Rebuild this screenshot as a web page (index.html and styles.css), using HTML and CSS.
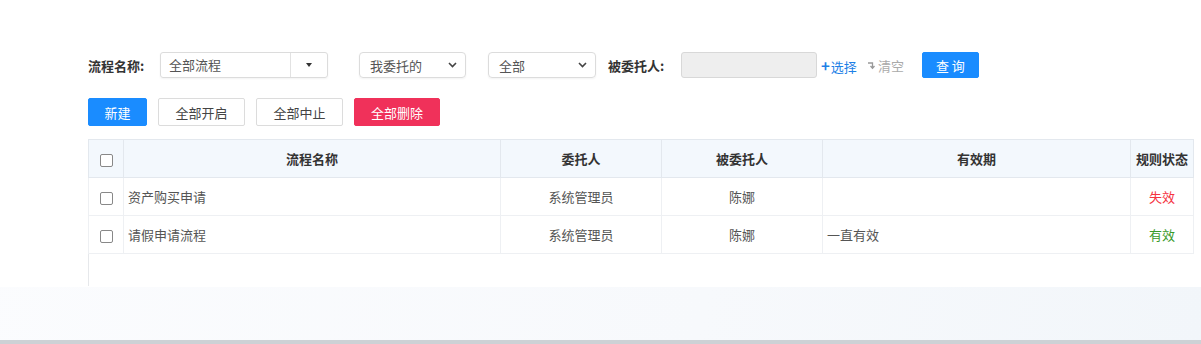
FILE: index.html
```html
<!DOCTYPE html>
<html lang="zh-CN">
<head>
    <meta charset="UTF-8">
    <title>委托管理</title>
    <link rel="stylesheet" href="styles.css">
</head>
<body>
    <div class="page">
        <div class="panel">
            <div class="filter-row">
                <span class="label">流程名称:</span>
                <div class="combo">
                    <span class="combo-text">全部流程</span>
                    <span class="combo-btn"><span class="caret"></span></span>
                </div>
                <div class="select sel-who">
                    <span>我委托的</span>
                    <svg class="chev" width="9" height="6" viewBox="0 0 9 6"><path d="M1 1l3.5 3.5L8 1" fill="none" stroke="#444" stroke-width="1.6"/></svg>
                </div>
                <div class="select sel-all">
                    <span>全部</span>
                    <svg class="chev" width="9" height="6" viewBox="0 0 9 6"><path d="M1 1l3.5 3.5L8 1" fill="none" stroke="#444" stroke-width="1.6"/></svg>
                </div>
                <span class="label label-to">被委托人:</span>
                <div class="input-disabled"></div>
                <a class="link-pick" href="#"><b>+</b>选择</a>
                <a class="link-clear" href="#">
                    <svg width="9" height="9" viewBox="0 0 9 9"><path d="M1 2h4.5v5M3.5 5l2 2.2 2-2.2" fill="none" stroke="#999" stroke-width="1.3"/></svg>清空
                </a>
                <button class="btn btn-blue btn-query">查 询</button>
            </div>

            <div class="btn-row">
                <button class="btn btn-blue btn-new">新建</button>
                <button class="btn btn-plain">全部开启</button>
                <button class="btn btn-plain">全部中止</button>
                <button class="btn btn-red">全部删除</button>
            </div>

            <div class="grid">
                <table>
                    <colgroup>
                        <col style="width:35px">
                        <col style="width:377px">
                        <col style="width:161px">
                        <col style="width:161px">
                        <col style="width:308px">
                        <col style="width:63px">
                    </colgroup>
                    <thead>
                        <tr>
                            <th><span class="check"></span></th>
                            <th>流程名称</th>
                            <th>委托人</th>
                            <th>被委托人</th>
                            <th>有效期</th>
                            <th>规则状态</th>
                        </tr>
                    </thead>
                    <tbody>
                        <tr>
                            <td><span class="check"></span></td>
                            <td class="left">资产购买申请</td>
                            <td>系统管理员</td>
                            <td>陈娜</td>
                            <td class="left"></td>
                            <td class="off">失效</td>
                        </tr>
                        <tr>
                            <td><span class="check"></span></td>
                            <td class="left">请假申请流程</td>
                            <td>系统管理员</td>
                            <td>陈娜</td>
                            <td class="left">一直有效</td>
                            <td class="on">有效</td>
                        </tr>
                    </tbody>
                </table>
            </div>
        </div>
    </div>
</body>
</html>
```

FILE: styles.css
```css
html, body {
    margin: 0;
    height: 100%;
}
body {
    font-family: "Noto Sans CJK SC", "Microsoft YaHei", sans-serif;
    font-size: 13px;
    color: #444;
    background: linear-gradient(100deg, #fbfcfe 0%, #f7f9fc 60%, #f2f6fa 100%);
    overflow: hidden;
}
.page {
    height: 340px;
    border-bottom: 4px solid #cdd1d5;
    box-sizing: content-box;
    background: linear-gradient(to bottom, #ffffff 0, #ffffff 287px, transparent 287px);
}
.panel {
    margin-left: 88px;
    width: 1109px;
    padding-top: 52px;
    height: 235px;
    background: #fff;
}
.filter-row {
    display: flex;
    align-items: center;
    height: 26px;
}
.label {
    font-weight: bold;
    color: #333;
    width: 62px;
}
.label-to {
    margin-left: 12px;
    width: 64px;
}
.combo {
    margin-left: 10px;
    width: 168px;
    height: 26px;
    box-sizing: border-box;
    border: 1px solid #dcdcdc;
    border-radius: 3px;
    display: flex;
    box-shadow: 0 1px 2px rgba(0, 0, 0, 0.05);
}
.combo-text {
    flex: 1;
    padding-left: 8px;
    line-height: 24px;
    color: #555;
    border-right: 1px solid #e2e2e2;
}
.combo-btn {
    width: 36px;
    display: flex;
    align-items: center;
    justify-content: center;
}
.caret {
    width: 0;
    height: 0;
    border-left: 3px solid transparent;
    border-right: 3px solid transparent;
    border-top: 4px solid #333;
}
.select {
    height: 26px;
    box-sizing: border-box;
    border: 1px solid #dcdcdc;
    border-radius: 4px;
    display: flex;
    align-items: center;
    justify-content: space-between;
    padding: 0 8px 0 10px;
    color: #555;
    box-shadow: 0 1px 2px rgba(0, 0, 0, 0.05);
}
.sel-who {
    margin-left: 31px;
    width: 107px;
}
.sel-all {
    margin-left: 22px;
    width: 108px;
}
.input-disabled {
    margin-left: 9px;
    width: 136px;
    height: 26px;
    box-sizing: border-box;
    border: 1px solid #d8d8d8;
    border-radius: 3px;
    background: #eeeeee;
}
.link-pick {
    margin-left: 4px;
    color: #1e80e6;
    text-decoration: none;
}
.link-pick b {
    font-size: 15px;
    margin-right: 1px;
}
.link-clear {
    margin-left: 10px;
    color: #aaa;
    text-decoration: none;
    display: flex;
    align-items: center;
    gap: 2px;
}
.btn {
    font-family: inherit;
    font-size: 13px;
    height: 28px;
    border-radius: 2px;
    border: 1px solid #dcdcdc;
    background: #fff;
    color: #444;
    cursor: pointer;
    padding: 0;
}
.btn-blue {
    background: #1a8cff;
    border-color: #1a8cff;
    color: #fff;
}
.btn-red {
    background: #f0315a;
    border-color: #f0315a;
    color: #fff;
    width: 86px;
}
.btn-query {
    margin-left: 18px;
    width: 57px;
    height: 26px;
}
.btn-row {
    display: flex;
    gap: 11px;
    margin-top: 20px;
}
.btn-new {
    width: 59px;
}
.btn-plain {
    width: 87px;
}
.grid {
    margin-top: 13px;
    height: 147px;
    width: 1109px;
    border-left: 1px solid #e6e8eb;
    box-sizing: border-box;
}
table {
    border-collapse: collapse;
    table-layout: fixed;
    width: 1105px;
    margin-left: -1px;
}
th, td {
    height: 37px;
    padding: 0;
    text-align: center;
    border: 1px solid #eef0f3;
    white-space: nowrap;
    overflow: hidden;
}
th {
    height: 37px;
    background: #f3f8fd;
    color: #333;
    font-weight: bold;
    border-color: #e3e8ee;
}
td {
    color: #555;
}
td.left {
    text-align: left;
    padding-left: 4px;
}
td.off {
    color: #f5333f;
}
td.on {
    color: #3a9a2a;
}
.check {
    display: inline-block;
    width: 11px;
    height: 11px;
    border: 1px solid #888;
    border-radius: 2px;
    background: #fff;
    vertical-align: middle;
}
```
